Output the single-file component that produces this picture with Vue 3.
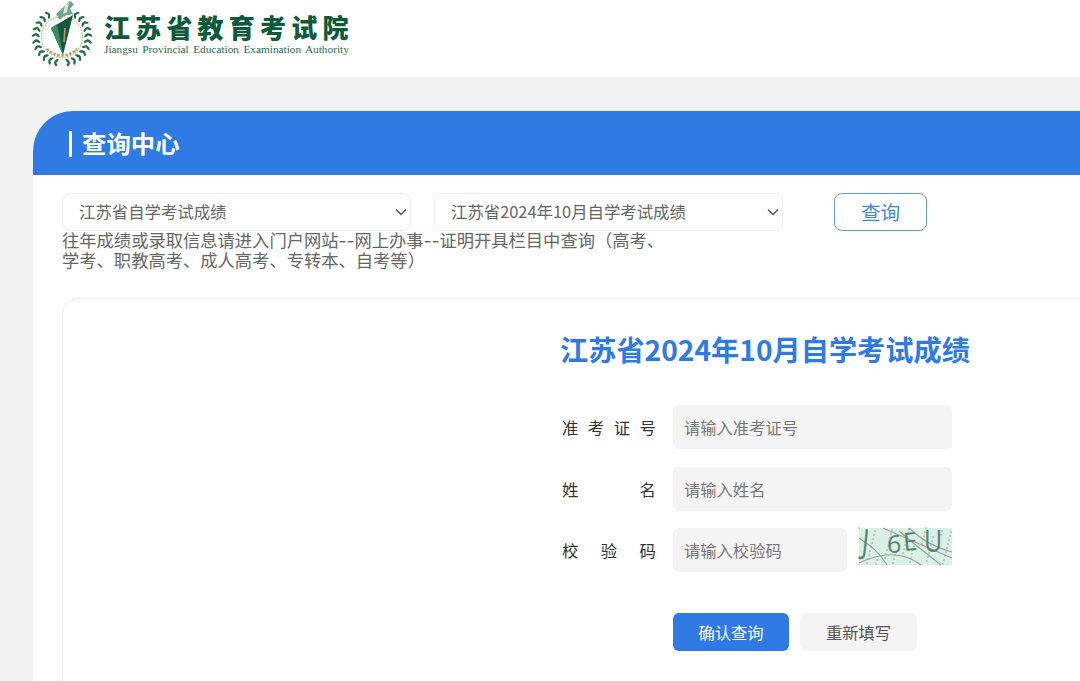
<template>
  <div class="page">
    <div class="top">
      <svg class="logo" width="62" height="66" viewBox="0 0 62 66">
        <g fill="#1f6b45">
          <ellipse v-for="l in leaves" :key="l.id" :cx="l.x" :cy="l.y" rx="2.7" ry="1.2" :transform="`rotate(${l.r} ${l.x} ${l.y})`" />
        </g>
        <circle cx="32" cy="37" r="20.5" fill="none" stroke="#d8b28a" stroke-width="1.2" stroke-dasharray="1.6 1.2" />
        <path d="M17 54 A 20.5 20.5 0 0 0 47 54" transform="translate(0 -5)" fill="none" stroke="#c98f5c" stroke-width="2.6" stroke-dasharray="2.4 1.6" />
        <path d="M26 14 L40 1 L44 4 L40 9 L43 14 L34 16 L30 20 Z" fill="#6fa58a" />
        <path d="M35 5 L39 3 L37 12 L33 14 Z" fill="#d6e6dc" />
        <path d="M21 28 L43 15 L33 55 Z" fill="#0f5a3a" />
        <path d="M21 28 L27 24 L33 55 Z" fill="#3f8a68" />
        <path d="M35 28 L34 42" stroke="#c9925f" stroke-width="1.6" />
      </svg>
      <div class="brand">
        <div class="brand-cn">江苏省教育考试院</div>
        <div class="brand-en">Jiangsu Provincial Education Examination Authority</div>
      </div>
    </div>

    <div class="panel">
      <div class="panel-head">查询中心</div>
      <div class="panel-body">
        <div class="filters">
          <div class="sel-wrap">
            <select class="sel">
              <option>江苏省自学考试成绩</option>
            </select>
            <svg class="arrow" width="12" height="8" viewBox="0 0 12 8"><path d="M1 1.5 L6 6.5 L11 1.5" fill="none" stroke="#555" stroke-width="1.5" /></svg>
          </div>
          <div class="sel-wrap">
            <select class="sel">
              <option>江苏省2024年10月自学考试成绩</option>
            </select>
            <svg class="arrow" width="12" height="8" viewBox="0 0 12 8"><path d="M1 1.5 L6 6.5 L11 1.5" fill="none" stroke="#555" stroke-width="1.5" /></svg>
          </div>
          <button class="search">查询</button>
        </div>
        <p class="note">往年成绩或录取信息请进入门户网站--网上办事--证明开具栏目中查询（高考、学考、职教高考、成人高考、专转本、自考等）</p>

        <div class="card">
          <h1>江苏省2024年10月自学考试成绩</h1>
          <div class="row">
            <label>准考证号</label>
            <input class="ipt" placeholder="请输入准考证号" />
          </div>
          <div class="row second">
            <label>姓名</label>
            <input class="ipt" placeholder="请输入姓名" />
          </div>
          <div class="row">
            <label>校验码</label>
            <input class="ipt short" placeholder="请输入校验码" />
            <svg class="captcha" width="93" height="37" viewBox="0 0 93 37">
              <rect width="93" height="37" fill="#d9f0e4" />
              <path d="M0 35 C25 23 45 24 62 37 M24 0 C46 10 70 20 93 30 M40 3 C55 16 68 26 82 37 M50 0 C62 12 78 20 93 24 M0 10 C12 18 20 24 28 37" fill="none" stroke="#a09c98" stroke-width="1.1" />
              <g fill="#85887f">
                <circle v-for="d in dots" :key="d.id" :cx="d.x" :cy="d.y" r="0.7" />
              </g>
              <text class="cap" transform="translate(2 25) rotate(6) scale(1 1.35)">J</text>
              <text class="cap" transform="translate(28 25)">6</text>
              <text class="cap" transform="translate(45 23) rotate(-5)">E</text>
              <text class="cap" transform="translate(65 24) scale(1 1.25)">U</text>
            </svg>
          </div>
          <div class="actions">
            <button class="primary">确认查询</button>
            <button class="reset">重新填写</button>
          </div>
        </div>
      </div>
    </div>
  </div>
</template>

<script setup>
// 徽标的麦穗叶子，沿圆弧两侧各排两列
const leaves = []
let id = 0
for (const side of [-1, 1]) {
  for (let k = 0; k < 11; k++) {
    const deg = 32 + k * 13.5
    const a = (deg * Math.PI) / 180
    for (const [r, tilt] of [[28, 35], [24.5, -35]]) {
      const x = 32 + side * r * Math.sin(a)
      const y = 37 - r * Math.cos(a)
      leaves.push({ id: id++, x, y, r: side * (deg + tilt - 90) })
    }
  }
}

// 验证码背景噪点
const dots = []
for (let i = 0; i < 60; i++) {
  dots.push({ id: i, x: (i * 37) % 93, y: (i * 23) % 37 })
}
</script>

<style scoped>
.page {
  width: 1080px;
  height: 681px;
  overflow: hidden;
  background: #f2f2f2;
  font-family: "Noto Sans CJK SC", "Liberation Sans", sans-serif;
}
.top {
  height: 77px;
  background: #fff;
  display: flex;
  align-items: flex-start;
  padding-left: 30px;
  box-sizing: border-box;
}
.logo {
  flex: none;
}
.brand {
  margin-left: 12px;
  padding-top: 12px;
  color: #0e5a3b;
}
.brand-cn {
  font-size: 26px;
  line-height: 30px;
  font-weight: 900;
  letter-spacing: 5.2px;
  white-space: nowrap;
}
.brand-en {
  font-family: "Liberation Serif", serif;
  font-size: 11.3px;
  line-height: 14px;
  word-spacing: 1.6px;
  white-space: nowrap;
  color: #2a6a4e;
}
.panel {
  margin: 34px 0 0 33px;
  width: 1100px;
  background: #fff;
  border-radius: 40px 0 0 0;
  height: 600px;
  overflow: hidden;
}
.panel-head {
  height: 64px;
  box-sizing: border-box;
  padding: 0 0 2px 36px;
  background: #2f7ae3;
  color: #fff;
  font-size: 24.4px;
  font-weight: 700;
  display: flex;
  align-items: center;
}
.panel-head::before {
  content: "";
  width: 3px;
  height: 26px;
  margin: 4px 10px 0 0;
  background: #fff;
}
.panel-body {
  padding: 18px 29px;
}
.filters {
  display: flex;
  align-items: center;
}
.sel-wrap {
  position: relative;
  margin-right: 23px;
}
.sel {
  display: block;
  appearance: none;
  width: 349px;
  height: 38px;
  box-sizing: border-box;
  padding: 0 0 2px 16px;
  border: 1px solid #eee;
  border-radius: 8px;
  background: #fff;
  color: #666;
  font-size: 16.4px;
  font-family: inherit;
}
.arrow {
  position: absolute;
  top: 15px;
  right: 4px;
  pointer-events: none;
}
.search {
  width: 93px;
  height: 38px;
  margin-left: 28px;
  padding: 0 0 2px;
  background: #fff;
  border: 1px solid #5e9aeb;
  border-radius: 8px;
  color: #3f86e6;
  font-size: 19.6px;
  font-family: inherit;
}
.note {
  width: 615px;
  margin: 0;
  font-family: Inter, "Noto Sans CJK SC", sans-serif;
  font-size: 17.3px;
  line-height: 20px;
  color: #666;
}
.card {
  margin-top: 27px;
  width: 1100px;
  height: 500px;
  border: 1px solid #eee;
  border-radius: 16px;
  box-sizing: border-box;
  padding: 30px 0 0 498px;
}
h1 {
  margin: 0 0 36px -1px;
  font-size: 28.2px;
  line-height: 40px;
  font-weight: 700;
  color: #2f7ae3;
  white-space: nowrap;
}
.row {
  display: flex;
  align-items: flex-start;
  margin-bottom: 18px;
}
.row.second {
  margin-bottom: 17px;
}
.row label {
  width: 94px;
  margin: 0 17px 0 1px;
  font-size: 16.4px;
  line-height: 44px;
  color: #333;
  text-align: justify;
  text-align-last: justify;
}
.ipt {
  width: 279px;
  height: 44px;
  box-sizing: border-box;
  padding: 0 11px 1px;
  border: none;
  border-radius: 6px;
  background: #f4f4f4;
  font-size: 16.3px;
  font-family: inherit;
  outline: none;
}
.ipt::placeholder {
  color: #777;
}
.ipt.short {
  width: 174px;
}
.captcha {
  margin-left: 12px;
  border-radius: 4px;
  overflow: visible;
}
.cap {
  font-family: "Open Sans", sans-serif;
  font-weight: 400;
  font-size: 25px;
  fill: #5a8072;
}
.actions {
  display: flex;
  gap: 11px;
  margin: 41px 0 0 112px;
}
.actions button {
  width: 116px;
  height: 38px;
  padding: 0;
  border: none;
  border-radius: 6px;
  font-size: 16.3px;
  font-family: inherit;
}
.primary {
  background: #2f7ae3;
  color: #fff;
}
.actions .reset {
  width: 117px;
  background: #f4f4f4;
  color: #555;
}
</style>
